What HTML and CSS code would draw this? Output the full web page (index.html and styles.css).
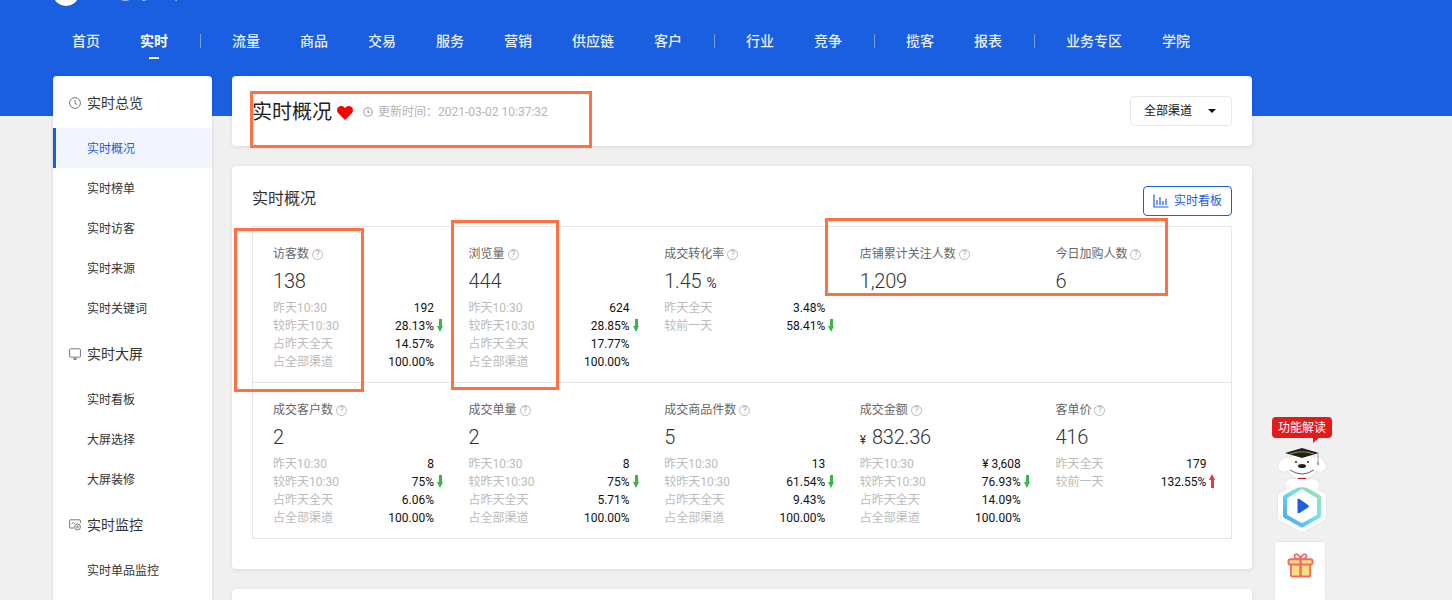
FILE: index.html
```html
<!DOCTYPE html>
<html lang="zh">
<head>
<meta charset="utf-8">
<title>实时概况</title>
<link rel="stylesheet" href="styles.css">
</head>
<body>
<header class="top">
  <div class="logo"><span class="logo-mark"></span><span class="logo-text">生意参谋</span></div>
  <nav class="nav">
    <a>首页</a><a class="on">实时</a><i></i><a>流量</a><a>商品</a><a>交易</a><a>服务</a><a>营销</a><a>供应链</a><a>客户</a><i></i><a>行业</a><a>竞争</a><i></i><a>揽客</a><a>报表</a><i></i><a>业务专区</a><a>学院</a>
  </nav>
</header>
<div class="page">
  <aside class="side">
    <div class="group low"><svg class="gi" viewBox="0 0 12 12"><circle cx="6" cy="6" r="5.4"/><path d="M6 2.8V6.3L8.2 7.6"/></svg>实时总览</div>
    <a class="item low active">实时概况</a><a class="item low">实时榜单</a><a class="item low">实时访客</a><a class="item low">实时来源</a><a class="item low">实时关键词</a>
    <div class="group"><svg class="gi" viewBox="0 0 12 12"><path d="M1.5 .8H10.5Q11.4 .8 11.4 1.7V8.3Q11.4 9.2 10.5 9.2H1.5Q.6 9.2 .6 8.3V1.7Q.6 .8 1.5 .8Z"/><path d="M4.5 11H7.500" stroke-width="1.600"/></svg>实时大屏</div>
    <a class="item">实时看板</a><a class="item">大屏选择</a><a class="item">大屏装修</a>
    <div class="group tight"><svg class="gi" viewBox="0 0 12 12"><path d="M5 9H1.400Q.6 9 .6 8.200V1.600Q.6 .8 1.400 .8H10.600Q11.400 .8 11.400 1.600V4"/><circle cx="8.500" cy="8" r="2.900"/><circle cx="8.500" cy="8" r=".8"/><path d="M2.500 5L4.500 3.500L6 5"/></svg>实时监控</div>
    <a class="item">实时单品监控</a>
  </aside>
  <main class="main">
    <section class="card head-card">
      <h1 class="h1">实时概况</h1>
      <svg class="heart" viewBox="0 0 16 14"><path d="M8 14L1.300 7.300C-.4 5.500-.4 2.900 1.200 1.300C2.900-.4 5.500-.4 7.200 1.200L8 2L8.800 1.200C10.500-.4 13.100-.4 14.800 1.300C16.400 2.900 16.400 5.500 14.700 7.300Z"/></svg>
      <svg class="clock" viewBox="0 0 10 10"><circle cx="5" cy="5" r="4.200"/><path d="M5 2.800V5.300H7"/></svg>
      <span class="upd">更新时间：2021-03-02 10:37:32</span>
      <div class="select">全部渠道<span class="caret"></span></div>
    </section>
    <section class="card data-card">
      <div class="data-head">
        <h2 class="h2">实时概况</h2>
        <a class="btn"><svg class="bar" viewBox="0 0 16 14"><path d="M1 .5V13H15.500M4 11V6M7 11V3M10 11V7M13 11V4.500"/></svg>实时看板</a>
      </div>
      <div class="table">
        <div class="row">
          <div class="cell">
            <div class="name">访客数<span class="q">?</span></div><div class="val">138</div>
            <div class="m"><span>昨天10:30</span><b>192</b><em></em></div>
            <div class="m"><span>较昨天10:30</span><b>28.13%</b><em class="down"></em></div>
            <div class="m"><span>占昨天全天</span><b>14.57%</b><em></em></div>
            <div class="m"><span>占全部渠道</span><b>100.00%</b><em></em></div>
          </div>
          <div class="cell">
            <div class="name">浏览量<span class="q">?</span></div><div class="val">444</div>
            <div class="m"><span>昨天10:30</span><b>624</b><em></em></div>
            <div class="m"><span>较昨天10:30</span><b>28.85%</b><em class="down"></em></div>
            <div class="m"><span>占昨天全天</span><b>17.77%</b><em></em></div>
            <div class="m"><span>占全部渠道</span><b>100.00%</b><em></em></div>
          </div>
          <div class="cell">
            <div class="name">成交转化率<span class="q">?</span></div><div class="val">1.45<small class="pct">%</small></div>
            <div class="m"><span>昨天全天</span><b>3.48%</b><em></em></div>
            <div class="m"><span>较前一天</span><b>58.41%</b><em class="down"></em></div>
          </div>
          <div class="cell">
            <div class="name">店铺累计关注人数<span class="q">?</span></div><div class="val">1,209</div>
          </div>
          <div class="cell">
            <div class="name">今日加购人数<span class="q">?</span></div><div class="val">6</div>
          </div>
        </div>
        <div class="row">
          <div class="cell">
            <div class="name">成交客户数<span class="q">?</span></div><div class="val">2</div>
            <div class="m"><span>昨天10:30</span><b>8</b><em></em></div>
            <div class="m"><span>较昨天10:30</span><b>75%</b><em class="down"></em></div>
            <div class="m"><span>占昨天全天</span><b>6.06%</b><em></em></div>
            <div class="m"><span>占全部渠道</span><b>100.00%</b><em></em></div>
          </div>
          <div class="cell">
            <div class="name">成交单量<span class="q">?</span></div><div class="val">2</div>
            <div class="m"><span>昨天10:30</span><b>8</b><em></em></div>
            <div class="m"><span>较昨天10:30</span><b>75%</b><em class="down"></em></div>
            <div class="m"><span>占昨天全天</span><b>5.71%</b><em></em></div>
            <div class="m"><span>占全部渠道</span><b>100.00%</b><em></em></div>
          </div>
          <div class="cell">
            <div class="name">成交商品件数<span class="q">?</span></div><div class="val">5</div>
            <div class="m"><span>昨天10:30</span><b>13</b><em></em></div>
            <div class="m"><span>较昨天10:30</span><b>61.54%</b><em class="down"></em></div>
            <div class="m"><span>占昨天全天</span><b>9.43%</b><em></em></div>
            <div class="m"><span>占全部渠道</span><b>100.00%</b><em></em></div>
          </div>
          <div class="cell">
            <div class="name">成交金额<span class="q">?</span></div><div class="val"><small class="yen">¥</small>832.36</div>
            <div class="m"><span>昨天10:30</span><b>¥ 3,608</b><em></em></div>
            <div class="m"><span>较昨天10:30</span><b>76.93%</b><em class="down"></em></div>
            <div class="m"><span>占昨天全天</span><b>14.09%</b><em></em></div>
            <div class="m"><span>占全部渠道</span><b>100.00%</b><em></em></div>
          </div>
          <div class="cell narrow">
            <div class="name">客单价<span class="q">?</span></div><div class="val">416</div>
            <div class="m"><span>昨天全天</span><b>179</b><em></em></div>
            <div class="m"><span>较前一天</span><b>132.55%</b><em class="up"></em></div>
          </div>
        </div>
      </div>
    </section>
    <section class="card tail-card"></section>
  </main>
</div>

<div class="mark mark-a"></div>
<div class="mark mark-b"></div>
<div class="mark mark-c"></div>
<div class="mark mark-d"></div>

<div class="float">
  <div class="tip">功能解读</div>
  <svg class="mascot" viewBox="0 0 50 84">
    <defs>
      <linearGradient id="hx" x1="0" y1="1" x2="1" y2="0"><stop offset="0" stop-color="#45a4f0"/><stop offset=".55" stop-color="#72dff0"/><stop offset="1" stop-color="#a8e39a"/></linearGradient>
      <filter id="soft" x="-20%" y="-20%" width="140%" height="140%"><feDropShadow dx="0" dy="0" stdDeviation="1.200" flood-color="#000" flood-opacity=".12"/></filter>
    </defs>
    <path d="M25 36L47 48.500V71L25 83L3 71V48.500Z" fill="#fff" stroke="#fff" stroke-width="4" stroke-linejoin="round" filter="url(#soft)"/>
    <path d="M25 40L42 50V69L25 78.500L8 69V50Z" fill="#fff" stroke="url(#hx)" stroke-width="4" stroke-linejoin="round"/>
    <path d="M20.500 53Q20.500 51 22.500 52L31 58Q32.500 59 31 60.500L22.500 66Q20.500 67 20.500 65Z" fill="#1a5fdf"/>
    <g filter="url(#soft)">
      <path d="M1 20Q3 11 12 10L13 23Q4 27 1 20ZM49 20Q47 11 38 10L37 23Q46 27 49 20Z" fill="#fff"/>
      <ellipse cx="25" cy="19" rx="14.500" ry="13" fill="#fff"/>
      <path d="M8 39Q8 32 16 32H34Q42 32 42 39Q40 45 34 43Q25 37 16 43Q10 45 8 39Z" fill="#fff"/>
    </g>
    <path d="M13 23Q25 31 37 23" fill="none" stroke="#333" stroke-width=".8"/>
    <path d="M21 31.500H29" stroke="#c8102e" stroke-width="1.200"/>
    <circle cx="19" cy="15" r="1" fill="#222"/><circle cx="31" cy="15" r="1" fill="#222"/>
    <ellipse cx="25" cy="19" rx="4" ry="2" fill="#222"/>
    <path d="M25 1L42 6L25 11L8 6Z" fill="#222"/>
    <path d="M13 7Q25 2.500 37 7" fill="none" stroke="#e4b13a" stroke-width=".7"/>
    <path d="M41 6V18" stroke="#bbb" stroke-width="1.400"/>
    <path d="M41 15V18" stroke="#e4863a" stroke-width="1.600"/>
  </svg>
  <div class="gift">
    <svg viewBox="0 0 28 26"><path d="M4 12H24V23Q24 25 22 25H6Q4 25 4 23Z" fill="#fbdc7f" stroke="#ee6b66" stroke-width="2"/><rect x="1.500" y="7" width="25" height="5.500" rx="2" fill="#fbdc7f" stroke="#ee6b66" stroke-width="2"/><path d="M14 7V25" stroke="#ee6b66" stroke-width="2.500"/><path d="M14 7C10 7 7 5.500 8 3C9 .5 13 2 14 7C15 2 19 .5 20 3C21 5.500 18 7 14 7Z" fill="#fff" stroke="#ee6b66" stroke-width="1.800"/></svg>
  </div>
</div>
</body>
</html>
```
FILE: styles.css
```css
* { box-sizing: border-box; }
html, body { margin: 0; height: 600px; overflow: hidden; }
body {
  position: relative;
  background: #f0f0f0;
  color: #333;
  font: 12px/18px Roboto, "Noto Sans CJK SC", sans-serif;
}
.top { height: 116px; background: #1a5fdf; color: #fff; overflow: hidden; }
.logo { display: flex; height: 27px; margin-top: -14px; padding-left: 54px; align-items: flex-start; }
.logo-mark { width: 24px; height: 20px; border-radius: 50%; background: #fff; }
.logo-text { margin: -5px 0 0 12px; font-size: 22px; line-height: 20px; letter-spacing: 2px; opacity: .9; }
.nav { display: flex; align-items: center; gap: 40px; padding: 18px 0 0 72px; font-size: 14px; line-height: 20px; }
.nav a { position: relative; color: rgba(255,255,255,.92); font-weight: 500; }
.nav a.on { color: #fff; font-weight: 700; }
.nav a.on::after { content: ""; position: absolute; left: 9px; top: 26px; width: 10px; height: 2px; background: #fff; }
.nav i { width: 1px; height: 14px; margin: 0 -8.5px; background: rgba(255,255,255,.4); }
.page { display: flex; align-items: flex-start; gap: 20px; margin: -40px 0 0 53px; width: 1199px; }
.side { flex: none; width: 159px; height: 600px; background: #fff; border-radius: 4px 4px 0 0; box-shadow: 0 0 3px rgba(0,0,0,.16); }
.group { display: flex; align-items: center; height: 52px; padding-left: 16px; font-size: 14px; color: #333; }
.group.low { padding-top: 2px; }
.group.tight { height: 51px; margin-top: -1px; margin-bottom: 1px; }
.gi { width: 12px; height: 12px; margin-right: 6px; fill: none; stroke: #666; stroke-width: .9; }
.item { display: block; height: 40px; padding-left: 34px; line-height: 40px; color: #333; }
.item.low { line-height: 42px; }
.item.active { color: #1a5fdf; background: #f2f5fe; border-left: 3px solid #1a5fdf; padding-left: 31px; }
.main { flex: 1; min-width: 0; }
.card { background: #fff; border-radius: 4px; box-shadow: 0 1px 4px rgba(0,0,0,.1); margin-bottom: 20px; }
.head-card { display: flex; align-items: center; height: 70px; padding: 0 20px; }
.h1 { margin: 2px 0 0; font-size: 20px; line-height: 28px; font-weight: 400; color: #222; }
.heart { width: 16px; height: 14px; margin: 3px 0 0 5px; fill: #f00; }
.clock { width: 10px; height: 10px; margin: 2px 0 0 10px; fill: none; stroke: #999; stroke-width: 1.100; }
.upd { margin: 2px 0 0 5px; color: #b4b4b4; }
.select { display: flex; align-items: center; justify-content: space-between; width: 102px; height: 30px; margin: 0 0 0 auto; padding: 0 15px 0 13px; border: 1px solid #e8e8e8; border-radius: 4px; color: #111; }
.caret { width: 0; height: 0; border: 4px solid transparent; border-top-color: #111; border-bottom: 0; }
.data-card { height: 403px; padding: 20px 20px 0; }
.data-head { display: flex; align-items: center; justify-content: space-between; height: 30px; margin-bottom: 10px; }
.h2 { margin: 0 0 4px; font-size: 16px; line-height: 26px; font-weight: 400; color: #333; }
.btn { display: flex; align-items: center; width: 89px; height: 30px; padding-left: 9px; border: 1px solid #1a5fdf; border-radius: 4px; color: #1a5fdf; }
.bar { width: 16px; height: 14px; margin-right: 5px; fill: none; stroke: #1a5fdf; stroke-width: 1.200; }
.table { height: 313px; border: 1px solid #e6e6e6; }
.row { display: grid; grid-template-columns: repeat(5, 1fr); height: 155px; }
.row + .row { height: 156px; border-top: 1px solid #e6e6e6; }
.cell { padding: 18px 0 0 20px; min-width: 0; }
.name { display: flex; align-items: center; height: 18px; color: #666; }
.q { width: 11px; height: 11px; margin-left: 3px; border: 1px solid #bbb; border-radius: 50%; color: #aaa; font-size: 9px; line-height: 9px; text-align: center; }
.val { height: 26px; margin: 5px 0; font-size: 20px; line-height: 26px; font-weight: 300; letter-spacing: -.2px; color: #333; }
.pct { margin-left: 5px; font-size: 14px; font-weight: 400; }
.yen { margin-right: 6px; font-size: 12px; font-weight: 400; color: #333; }
.m { display: flex; width: 173px; height: 18px; }
.narrow .m { width: 163px; }
.m span { flex: 1; color: #bbb; white-space: nowrap; }
.m b { font-weight: 400; color: #111; white-space: nowrap; }
.m em { position: relative; flex: none; width: 10px; margin-left: 2px; }
.down::before, .up::before { content: ""; position: absolute; left: 3px; top: 2px; width: 3px; height: 9px; }
.down::after, .up::after { content: ""; position: absolute; left: 1px; border-left: 3.500px solid transparent; border-right: 3.500px solid transparent; }
.down::before { background: #3bb54a; }
.down::after { top: 9px; border-top: 6px solid #3bb54a; }
.up::before { top: 6px; background: #e5393a; }
.up::after { top: 1px; border-bottom: 6px solid #e5393a; }
.tail-card { height: 40px; margin-bottom: 0; }
.mark { position: absolute; border: 3px solid #ff7043; }
.mark-a { left: 250px; top: 91px; width: 342px; height: 57px; }
.mark-b { left: 234px; top: 228px; width: 130px; height: 164px; }
.mark-c { left: 451px; top: 220px; width: 108px; height: 170px; }
.mark-d { left: 825px; top: 218px; width: 343px; height: 78px; }
.float { position: absolute; left: 1272px; top: 417px; width: 60px; display: flex; flex-direction: column; align-items: flex-start; }
.tip { position: relative; width: 60px; height: 21px; background: #e31b1b; border-radius: 4px; color: #fff; line-height: 22px; text-align: center; }
.tip::after { content: ""; position: absolute; left: 41px; top: 21px; border-top: 5px solid #e31b1b; border-right: 6px solid transparent; }
.mascot { width: 50px; height: 84px; margin: 9px 0 0 5px; }
.gift { display: flex; justify-content: center; width: 50px; height: 58px; margin: 11px 0 0 3px; padding-top: 10px; background: #fff; box-shadow: 0 0 2px rgba(0,0,0,.12); }
.gift svg { width: 27px; height: 26px; }
```
